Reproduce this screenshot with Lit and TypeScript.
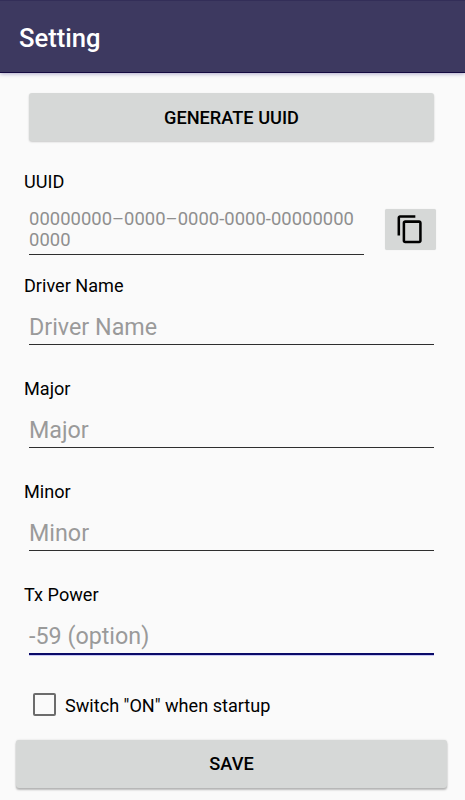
import { LitElement, html, css } from "lit";
import { customElement, property } from "lit/decorators.js";

@customElement("setting-field")
class SettingField extends LitElement {
  @property() label = "";
  @property() hint = "";
  @property({ type: Boolean, reflect: true }) focused = false;

  static styles = css`
    :host { display: block; height: 103px; box-sizing: border-box; }
    .label { height: 22px; line-height: 24px; font-size: 18.1px; padding-left: 24px; color: #000; white-space: nowrap; }
    .input {
      display: flex; align-items: center; box-sizing: border-box;
      margin: 13px 31px 0 29px; height: 36px; padding-top: 1px;
      border-bottom: 1px solid #2e2e2e; color: #9a9a9a; font-size: 23.3px; white-space: nowrap;
    }
    :host([focused]) .input { height: 37px; padding-top: 1px; border-bottom: 2px solid #0a0a68; box-shadow: 0 1px 0 #c9c9f4; }
  `;

  render() {
    return html`
      <div class="label">${this.label}</div>
      <div class="input">${this.hint}</div>
    `;
  }
}

@customElement("app-root")
class AppRoot extends LitElement {
  static styles = css`
    :host {
      display: flex; flex-direction: column; height: 800px; overflow: hidden;
      background: #fafafa; color: #000; font-family: Roboto, sans-serif; font-size: 18.1px;
    }
    .bar {
      display: flex; align-items: center; box-sizing: border-box; flex: none;
      height: 73px; padding: 3px 0 0 19px; background: #3d3960;
      border-top: 1px solid #332e58; border-bottom: 1px solid #140a40;
      box-shadow: 0 1px 4px rgba(60, 50, 130, 0.4);
      color: #fff; font-size: 25.6px; font-weight: 500;
    }
    .button {
      display: flex; align-items: center; justify-content: center; flex: none;
      background: #d6d8d7; border-radius: 3px; font-size: 18.2px; font-weight: 500;
      box-shadow: 0 1px 2px rgba(0, 0, 0, 0.2);
    }
    .generate { margin: 20px 31px 0 29px; height: 48px; }
    .uuid-label { height: 22px; line-height: 24px; margin: 29px 0 0 24px; }
    .uuid-row { display: flex; margin: 16px 29px 0 29px; height: 47px; justify-content: space-between; flex: none; }
    .uuid {
      width: 335px; box-sizing: border-box; height: 47px; border-bottom: 1px solid #2e2e2e;
      color: #8f8f8f; font-size: 18.4px; letter-spacing: 0.04px; line-height: 21px; white-space: nowrap;
    }
    .copy {
      display: flex; align-items: center; justify-content: center;
      width: 51px; height: 41px; margin-top: 1px; background: #d6d8d7; border-radius: 2px;
      box-shadow: 0 0 1px rgba(0, 0, 0, 0.15);
    }
    .fields { margin-top: 19px; flex: none; }
    .check { display: flex; align-items: flex-start; flex: none; height: 24px; line-height: 26px; margin: 7px 0 0 33px; gap: 9px; }
    .box { width: 23px; height: 23px; box-sizing: border-box; border: 2px solid #6c6c6c; border-radius: 2px; }
    .save { margin: 23px 18px 0 16px; height: 48px; padding-bottom: 1px; box-sizing: border-box; box-shadow: 0 2px 2px rgba(0, 0, 0, 0.25), 0 0 2px rgba(0, 0, 0, 0.15); }
  `;

  render() {
    return html`
      <div class="bar">Setting</div>
      <div class="button generate">GENERATE UUID</div>
      <div class="uuid-label">UUID</div>
      <div class="uuid-row">
        <div class="uuid">00000000–0000–0000-0000-00000000<br />0000</div>
        <div class="copy">
          <svg width="30.5" height="30.5" viewBox="0 0 24 24" fill="#000">
            <path d="M16 1H4c-1.1 0-2 .9-2 2v14h2V3h12V1zm3 4H8c-1.1 0-2 .9-2 2v14c0 1.1.9 2 2 2h11c1.1 0 2-.9 2-2V7c0-1.1-.9-2-2-2zm0 16H8V7h11v14z" />
          </svg>
        </div>
      </div>
      <div class="fields">
        <setting-field label="Driver Name" hint="Driver Name"></setting-field>
        <setting-field label="Major" hint="Major"></setting-field>
        <setting-field label="Minor" hint="Minor"></setting-field>
        <setting-field label="Tx Power" hint="-59 (option)" focused></setting-field>
      </div>
      <div class="check"><span class="box"></span><span>Switch "ON" when startup</span></div>
      <div class="button save">SAVE</div>
    `;
  }
}
